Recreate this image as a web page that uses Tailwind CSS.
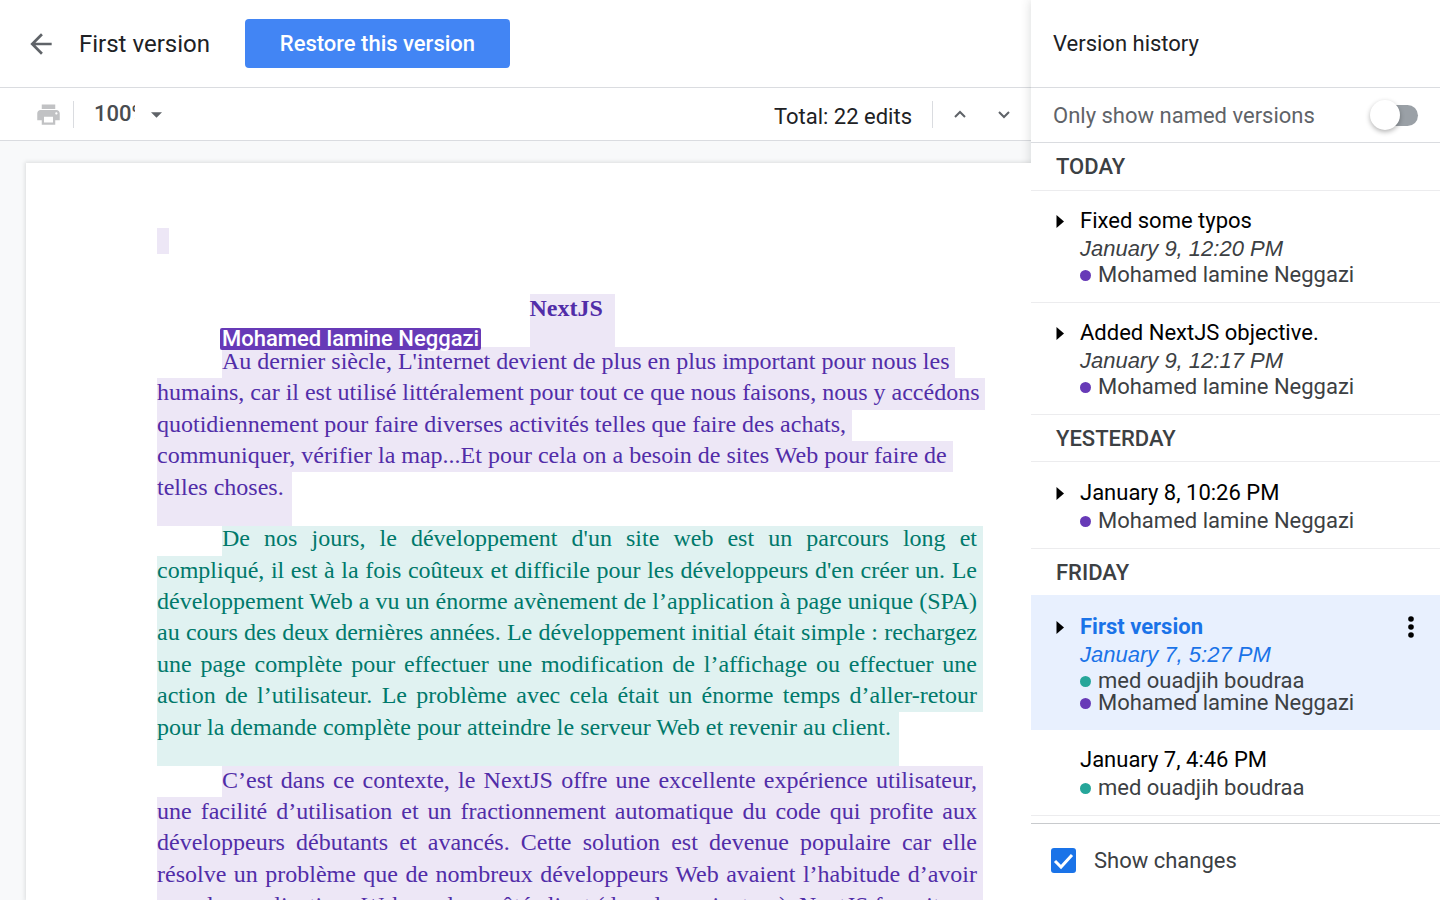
<!DOCTYPE html>
<html lang="en">
<head>
<meta charset="utf-8">
<meta name="viewport" content="width=device-width, initial-scale=1">
<title>Version history</title>
<script src="https://cdn.jsdelivr.net/npm/@tailwindcss/browser@4"></script>
</head>
<body class="flex h-screen overflow-hidden bg-white font-['Roboto',sans-serif] text-[22px] text-[#202124]">

<div class="flex min-w-0 flex-1 flex-col bg-[#f8f9fa]">
  <header class="flex h-22 shrink-0 items-center border-b border-[#dadce0] bg-white pl-[27px]">
    <button type="button" aria-label="Back" class="flex size-7 items-center justify-center text-[#5f6368]">
      <svg class="size-8 shrink-0" viewBox="0 0 24 24" fill="currentColor"><path d="M20 11H7.83l5.59-5.59L12 4l-8 8 8 8 1.41-1.41L7.83 13H20v-2z"/></svg>
    </button>
    <h1 class="ml-6 text-[24px] leading-8">First version</h1>
    <button type="button" class="ml-[35px] h-[49px] w-[265px] rounded-[4px] bg-[#4285f4] text-[22px] font-medium text-white">Restore this version</button>
  </header>

  <div class="flex h-[53px] shrink-0 items-center border-b border-[#dadce0] bg-white pl-[35px] pr-[15px]">
    <button type="button" aria-label="Print" class="text-[#c1c2c4]">
      <svg class="size-[27px]" viewBox="0 0 24 24" fill="currentColor"><path d="M19 8H5c-1.66 0-3 1.34-3 3v6h4v4h12v-4h4v-6c0-1.66-1.34-3-3-3zm-3 11H8v-5h8v5zm3-7c-.55 0-1-.45-1-1s.45-1 1-1 1 .45 1 1-.45 1-1 1zm-1-9H6v4h12V3z"/></svg>
    </button>
    <div class="ml-[11px] h-[27px] w-px bg-[#dadce0]"></div>
    <button type="button" aria-label="Zoom" class="ml-5 flex items-center">
      <span class="w-[41px] overflow-hidden pb-[2px] text-left font-medium whitespace-nowrap text-[#494c50]">100%</span>
      <svg class="mt-[2px] ml-4 h-[6px] w-[11px]" viewBox="0 0 10 5" fill="#5f6368"><path d="M0 0h10L5 5z"/></svg>
    </button>
    <span class="ml-auto pt-1">Total: 22 edits</span>
    <div class="ml-5 h-[27px] w-px bg-[#dadce0]"></div>
    <button type="button" aria-label="Previous edit" class="ml-[15px] flex size-6 items-center justify-center"><svg class="h-2 w-3" viewBox="0 0 12 8" fill="none" stroke="#5f6368" stroke-width="2"><path d="M1 7l5-5 5 5"/></svg></button>
    <button type="button" aria-label="Next edit" class="ml-5 flex size-6 items-center justify-center"><svg class="mt-px h-2 w-3" viewBox="0 0 12 8" fill="none" stroke="#5f6368" stroke-width="2"><path d="M1 1l5 5 5-5"/></svg></button>
  </div>

  <main class="flex min-h-0 flex-1 overflow-hidden pl-[26px] pt-[22px]">
    <article lang="fr" class="relative z-20 min-w-0 flex-1 overflow-hidden bg-white pt-[65px] pr-11 pl-[131px] font-['Liberation_Serif',serif] text-[24px] leading-[28px] whitespace-nowrap text-[#512da8] shadow-[0_0_4px_1px_rgba(60,64,67,0.15)]">
      <div class="h-[26px] w-3 bg-[#ede7f6]"></div>
      <h2 class="mx-auto mt-10 h-[53px] w-[85px] bg-[#ede7f6] font-bold">NextJS</h2>

      <div class="relative flex flex-col items-start">
        <span class="absolute -top-[19px] left-[63px] h-[22px] rounded-[2px] bg-[#673ab7] px-[2px] font-['Roboto',sans-serif] text-[22px] leading-[22px] font-medium text-white">Mohamed lamine Neggazi</span>
        <div class="ml-[65px] h-[31px] bg-[#ede7f6] pr-[6px]">Au dernier siècle, L'internet devient de plus en plus important pour nous les</div>
        <div class="h-8 bg-[#ede7f6] pr-[6px]">humains, car il est utilisé littéralement pour tout ce que nous faisons, nous y accédons</div>
        <div class="h-[31px] bg-[#ede7f6] pr-[6px]">quotidiennement pour faire diverses activités telles que faire des achats,</div>
        <div class="h-[31px] bg-[#ede7f6] pr-[6px]">communiquer, vérifier la map...Et pour cela on a besoin de sites Web pour faire de</div>
        <div class="h-[54px] bg-[#ede7f6] pr-2 leading-[30px]">telles choses.</div>
      </div>

      <div class="flex w-[826px] flex-col text-justify text-[#00796b] [text-align-last:justify]">
        <div class="ml-[65px] h-[30px] bg-[#e0f2f1] pr-[6px] leading-[24px]">De nos jours, le développement d'un site web est un parcours long et</div>
        <div class="h-[31px] bg-[#e0f2f1] pr-[6px]">compliqué, il est à la fois coûteux et difficile pour les développeurs d'en créer un. Le</div>
        <div class="h-[31px] bg-[#e0f2f1] pr-[6px]">développement Web a vu un énorme avènement de l’application à page unique (SPA)</div>
        <div class="h-[31px] bg-[#e0f2f1] pr-[6px]">au cours des deux dernières années. Le développement initial était simple : rechargez</div>
        <div class="h-8 bg-[#e0f2f1] pr-[6px] leading-[30px]">une page complète pour effectuer une modification de l’affichage ou effectuer une</div>
        <div class="h-[31px] bg-[#e0f2f1] pr-[6px]">action de l’utilisateur. Le problème avec cela était un énorme temps d’aller-retour</div>
        <div class="h-[54px] self-start bg-[#e0f2f1] pr-2 leading-[30px]">pour la demande complète pour atteindre le serveur Web et revenir au client.</div>
      </div>

      <div class="flex w-[826px] flex-col text-justify [text-align-last:justify]">
        <div class="ml-[65px] h-[31px] bg-[#ede7f6] pr-[6px]">C’est dans ce contexte, le NextJS offre une excellente expérience utilisateur,</div>
        <div class="h-[31px] bg-[#ede7f6] pr-[6px]">une facilité d’utilisation et un fractionnement automatique du code qui profite aux</div>
        <div class="h-[31px] bg-[#ede7f6] pr-[6px]">développeurs débutants et avancés. Cette solution est devenue populaire car elle</div>
        <div class="h-8 bg-[#ede7f6] pr-[6px] leading-[30px]">résolve un problème que de nombreux développeurs Web avaient l’habitude d’avoir</div>
        <div class="h-[31px] bg-[#ede7f6] pr-[6px]">avec les applications Web rendues côté client (dans le navigateur). NextJS fournit une</div>
      </div>
    </article>
  </main>
</div>

<aside class="relative z-10 flex w-[409px] shrink-0 flex-col bg-white text-[#3c4043] shadow-[0_0_10px_rgba(60,64,67,0.2)]">
  <h2 class="flex h-22 shrink-0 items-center border-b border-[#dadce0] px-[22px] text-[22px] text-[#202124]">Version history</h2>
  <div class="flex h-[55px] shrink-0 items-center justify-between border-b border-[#dadce0] px-[22px] text-[#5f6368]">
    <label for="named">Only show named versions</label>
    <span class="relative flex h-[21px] w-[42px] items-center">
      <input id="named" type="checkbox" role="switch" class="h-[21px] w-full appearance-none rounded-full bg-[#9aa0a6]">
      <span class="pointer-events-none absolute -left-[6px] size-[30px] rounded-full bg-white shadow-[0_2px_5px_rgba(0,0,0,0.3)]"></span>
    </span>
  </div>

  <div class="min-h-0 flex-1 overflow-hidden">
    <h3 class="h-12 border-b border-[#ececee] pl-[25px] leading-[47px] font-medium">TODAY</h3>
    <section class="flex border-b border-[#ececee] pt-4 pb-4 pl-[25px]">
      <button type="button" aria-label="Expand" class="flex h-7 w-6 items-center"><svg class="h-[13px] w-2" viewBox="0 0 8 13"><path d="M.500 0L8 6.500.500 13z"/></svg></button>
      <div>
        <h4 class="h-7 leading-7 text-black">Fixed some typos</h4>
        <p class="h-7 font-['Liberation_Sans',sans-serif] leading-7 italic">January 9, 12:20 PM</p>
        <p class="mt-px flex items-center gap-[7px] leading-[22px]"><span class="size-[11px] rounded-full bg-[#673ab7]"></span>Mohamed lamine Neggazi</p>
      </div>
    </section>
    <section class="flex border-b border-[#ececee] pt-4 pb-4 pl-[25px]">
      <button type="button" aria-label="Expand" class="flex h-7 w-6 items-center"><svg class="h-[13px] w-2" viewBox="0 0 8 13"><path d="M.500 0L8 6.500.500 13z"/></svg></button>
      <div>
        <h4 class="h-7 leading-7 text-black">Added NextJS objective.</h4>
        <p class="h-7 font-['Liberation_Sans',sans-serif] leading-7 italic">January 9, 12:17 PM</p>
        <p class="mt-px flex items-center gap-[7px] leading-[22px]"><span class="size-[11px] rounded-full bg-[#673ab7]"></span>Mohamed lamine Neggazi</p>
      </div>
    </section>

    <h3 class="h-[47px] border-b border-[#ececee] pl-[25px] leading-[47px] font-medium">YESTERDAY</h3>
    <section class="flex border-b border-[#ececee] pt-[17px] pb-4 pl-[25px]">
      <button type="button" aria-label="Expand" class="flex h-7 w-6 items-center"><svg class="h-[13px] w-2" viewBox="0 0 8 13"><path d="M.500 0L8 6.500.500 13z"/></svg></button>
      <div>
        <h4 class="h-7 leading-7 text-black">January 8, 10:26 PM</h4>
        <p class="mt-[3px] flex items-center gap-[7px] leading-[22px]"><span class="size-[11px] rounded-full bg-[#673ab7]"></span>Mohamed lamine Neggazi</p>
      </div>
    </section>

    <h3 class="h-[47px] border-b border-[#e8f0fe] pl-[25px] leading-[47px] font-medium">FRIDAY</h3>
    <section class="flex border-b border-[#e8f0fe] bg-[#e8f0fe] pt-[17px] pr-[26px] pb-[15px] pl-[25px]">
      <button type="button" aria-label="Expand" class="flex h-7 w-6 items-center"><svg class="h-[13px] w-2" viewBox="0 0 8 13"><path d="M.500 0L8 6.500.500 13z"/></svg></button>
      <div>
        <h4 class="h-7 leading-7 font-bold text-[#1a73e8]">First version</h4>
        <p class="h-7 font-['Liberation_Sans',sans-serif] leading-7 text-[#1a73e8] italic">January 7, 5:27 PM</p>
        <p class="mt-px flex items-center gap-[7px] leading-[22px]"><span class="size-[11px] rounded-full bg-[#26a69a]"></span>med ouadjih boudraa</p>
        <p class="flex items-center gap-[7px] leading-[22px]"><span class="size-[11px] rounded-full bg-[#673ab7]"></span>Mohamed lamine Neggazi</p>
      </div>
      <button type="button" aria-label="More actions" class="ml-auto flex h-7 items-center"><svg class="h-[22px] w-[6px]" viewBox="0 0 6 22"><circle cx="3" cy="3" r="2.800"/><circle cx="3" cy="11" r="2.800"/><circle cx="3" cy="19" r="2.800"/></svg></button>
    </section>
    <section class="border-b border-[#ececee] pt-4 pb-4 pl-[49px]">
      <h4 class="h-7 leading-7 text-black">January 7, 4:46 PM</h4>
      <p class="mt-[3px] flex items-center gap-[7px] leading-[22px]"><span class="size-[11px] rounded-full bg-[#26a69a]"></span>med ouadjih boudraa</p>
    </section>
  </div>

  <footer class="flex h-[77px] shrink-0 items-center border-t border-[#c8cacd] pb-[3px] pl-5">
    <span class="relative flex size-[25px]">
      <input id="changes" type="checkbox" checked class="size-full appearance-none rounded-[3px] bg-[#1a73e8]">
      <svg class="pointer-events-none absolute inset-0 size-full" viewBox="0 0 25 25" fill="none" stroke="#fff" stroke-width="3"><path d="M4 13l6 6L21 7"/></svg>
    </span>
    <label for="changes" class="ml-[18px]">Show changes</label>
  </footer>
</aside>
</body>
</html>
